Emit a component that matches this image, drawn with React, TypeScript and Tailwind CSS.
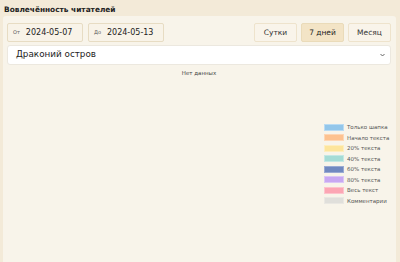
import React from "react";

const legend = [
  { label: "Только шапка", bg: "bg-[#93c6ea]", border: "border-[#b9dbf3]" },
  { label: "Начало текста", bg: "bg-[#fdc290]", border: "border-[#fed6b4]" },
  { label: "20% текста", bg: "bg-[#fde59c]", border: "border-[#feeebf]" },
  { label: "40% текста", bg: "bg-[#a5dcd6]", border: "border-[#c4e8e4]" },
  { label: "60% текста", bg: "bg-[#7189c0]", border: "border-[#9aaad3]" },
  { label: "80% текста", bg: "bg-[#c8a8f2]", border: "border-[#dbc6f6]" },
  { label: "Весь текст", bg: "bg-[#fca6b4]", border: "border-[#fdc4cd]" },
  { label: "Комментарии", bg: "bg-[#e0dfdb]", border: "border-[#eae8e3]" },
];

export default function App() {
  return (
    <div className="w-[400px] h-[262px] bg-[#f3ead8] flex flex-col overflow-hidden" style={{ fontFamily: '"DejaVu Sans", Verdana, sans-serif' }}>
      <div className="h-[16px] px-[4px] pt-[4px] text-[7.4px] leading-[12px] font-bold text-[#222]">Вовлечённость читателей</div>
      <div className="flex-1 ml-[3px] mr-[4px] bg-[#f8f4ea] rounded-t-[3px] pl-[4px] pr-[5px] pt-[7px] flex flex-col">
        <div className="flex items-center h-[19px]">
          <div className="w-[76px] h-[19px] border border-[#e7dcc3] rounded-[2px] bg-[#f8f3e8] flex items-center pl-[5px]">
            <span className="text-[5px] text-[#555] mr-[6px]">От</span>
            <span className="text-[8px] text-[#222]">2024-05-07</span>
          </div>
          <div className="w-[76px] h-[19px] ml-[5px] border border-[#e7dcc3] rounded-[2px] bg-[#f8f3e8] flex items-center pl-[5px]">
            <span className="text-[5px] text-[#555] mr-[6px]">До</span>
            <span className="text-[8px] text-[#222]">2024-05-13</span>
          </div>
          <div className="flex-1" />
          <div className="flex gap-[4px]">
            <div className="w-[43px] h-[19px] border border-[#eee3cc] rounded-[2px] bg-[#f9f4ea] flex items-center justify-center text-[7.5px] text-[#333]">Сутки</div>
            <div className="w-[43px] h-[19px] border border-[#eadbb9] rounded-[2px] bg-[#f3e4c6] flex items-center justify-center text-[7.5px] text-[#222]">7 дней</div>
            <div className="w-[43px] h-[19px] border border-[#eee3cc] rounded-[2px] bg-[#f9f4ea] flex items-center justify-center text-[7.5px] text-[#333]">Месяц</div>
          </div>
        </div>
        <div className="mt-[3px] h-[20px] bg-white border border-[#ece8df] rounded-[3px] flex items-center pl-[8px] pr-[5px]">
          <span className="text-[8.8px] text-[#222] flex-1">Драконий остров</span>
          <svg width="5" height="4" viewBox="0 0 5 4" className="text-[#555]">
            <path d="M0.5 1 L2.5 3 L4.5 1" fill="none" stroke="currentColor" strokeWidth="0.9" />
          </svg>
        </div>
        <div className="mt-[4px] text-center text-[5.5px] leading-[8px] text-[#444]">Нет данных</div>
        <div className="flex flex-1">
          <div className="flex-1" />
          <div className="w-[67px] pt-[45px] flex flex-col">
            {legend.map((l) => (
              <div key={l.label} className="h-[10.5px] flex items-center">
                <div className={`w-[20px] h-[7px] border ${l.bg} ${l.border}`} />
                <span className="ml-[3px] text-[5.5px] text-[#555]">{l.label}</span>
              </div>
            ))}
          </div>
        </div>
      </div>
    </div>
  );
}
